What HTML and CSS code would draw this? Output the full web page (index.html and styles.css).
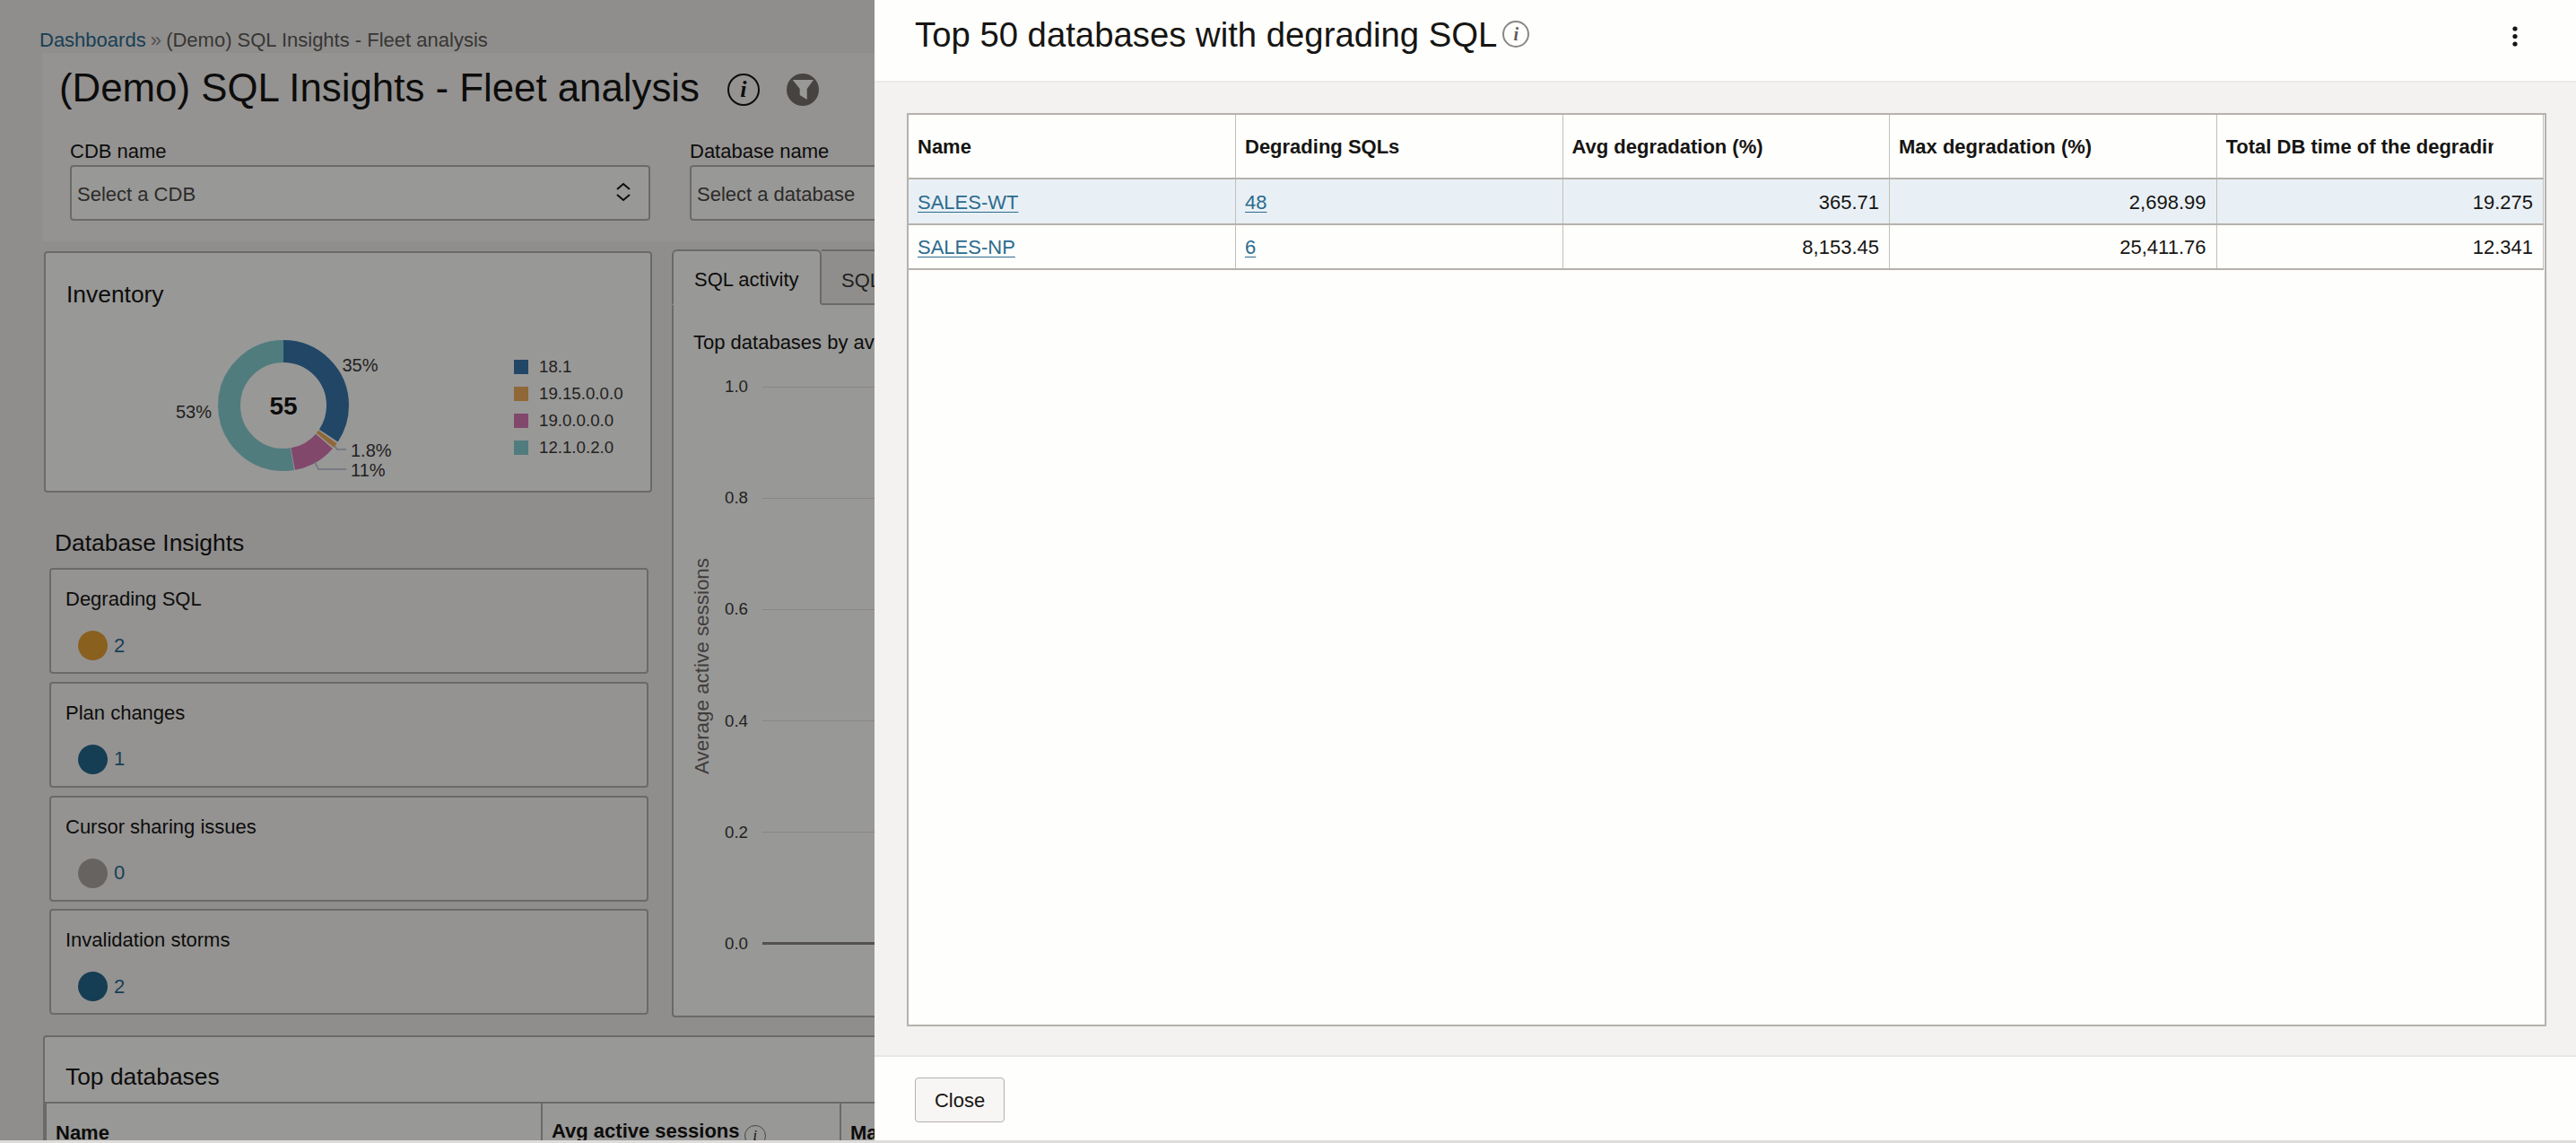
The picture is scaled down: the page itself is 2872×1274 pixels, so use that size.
FILE: index.html
```html
<!DOCTYPE html>
<html lang="en">
<head>
<meta charset="utf-8">
<title>(Demo) SQL Insights - Fleet analysis</title>
<link rel="stylesheet" href="styles.css">
</head>
<body>
<div class="page">
  <nav class="crumbs"><a class="link" href="#">Dashboards</a> <span class="sep">»</span> (Demo) SQL Insights - Fleet analysis</nav>
  <header class="titlebar">
    <div class="title-row">
      <h1>(Demo) SQL Insights - Fleet analysis</h1>
      <span class="info-lg"><i>i</i></span>
      <svg class="filter-icon" viewBox="0 0 36 36"><circle cx="18" cy="18" r="18" fill="#75716c"/><path d="M6.7 7H30L22.7 17V29L14.7 24V17Z" fill="#fefefc"/></svg>
    </div>
    <div class="filters">
      <label class="field"><span class="field-label">CDB name</span>
        <span class="select">Select a CDB
          <svg class="chev" viewBox="0 0 16 22"><path d="M1 8l7-6 7 6M1 14l7 6 7-6" fill="none" stroke="#161513" stroke-width="2"/></svg>
        </span></label>
      <label class="field"><span class="field-label">Database name</span>
        <span class="select">Select a database</span></label>
    </div>
  </header>

  <main class="grid">
    <div class="left">
      <section class="panel inventory">
        <h2>Inventory</h2>
        <div class="inv-body">
          <svg class="donut" viewBox="0 0 250 170" width="250" height="170">
            <g fill="none" stroke-width="25" transform="rotate(-90 126 87)">
              <circle cx="126" cy="87" r="60.5" pathLength="55" stroke="#3a76ab" stroke-dasharray="18.9 36.1" stroke-dashoffset="0"/>
              <circle cx="126" cy="87" r="60.5" pathLength="55" stroke="#f0ac5c" stroke-dasharray="0.7 54.3" stroke-dashoffset="-19.15"/>
              <circle cx="126" cy="87" r="60.5" pathLength="55" stroke="#d878b4" stroke-dasharray="5.9 49.1" stroke-dashoffset="-20.05"/>
              <circle cx="126" cy="87" r="60.5" pathLength="55" stroke="#87cfd2" stroke-dasharray="28.95 26.05" stroke-dashoffset="-26.05"/>
            </g>
            <path class="leader" d="M183 132l3 4h10M161 150l4 8h31"/>
            <text class="pct" x="191.5" y="49">35%</text>
            <text class="pct" x="6" y="101">53%</text>
            <text class="pct" x="201" y="144">1.8%</text>
            <text class="pct" x="201" y="166">11%</text>
            <text class="total" x="126" y="97" text-anchor="middle">55</text>
          </svg>
          <ul class="legend">
            <li><span class="sw s1"></span>18.1</li>
            <li><span class="sw s2"></span>19.15.0.0.0</li>
            <li><span class="sw s3"></span>19.0.0.0.0</li>
            <li><span class="sw s4"></span>12.1.0.2.0</li>
          </ul>
        </div>
      </section>
      <h2 class="insights-title">Database Insights</h2>
      <section class="card"><h3>Degrading SQL</h3><p class="metric"><span class="dot amber"></span><a class="link" href="#">2</a></p></section>
      <section class="card"><h3>Plan changes</h3><p class="metric"><span class="dot blue"></span><a class="link" href="#">1</a></p></section>
      <section class="card"><h3>Cursor sharing issues</h3><p class="metric"><span class="dot grey"></span><a class="link" href="#">0</a></p></section>
      <section class="card"><h3>Invalidation storms</h3><p class="metric"><span class="dot blue"></span><a class="link" href="#">2</a></p></section>
    </div>

    <section class="activity">
      <div class="tabs"><span class="tab active">SQL activity</span><span class="tab">SQL statistics</span></div>
      <div class="activity-body">
        <p class="chart-title">Top databases by average active sessions</p>
        <div class="chart">
          <span class="axis-title">Average active sessions</span>
          <div class="plot">
            <div class="tick"><span>1.0</span><b></b></div>
            <div class="tick"><span>0.8</span><b></b></div>
            <div class="tick"><span>0.6</span><b></b></div>
            <div class="tick"><span>0.4</span><b></b></div>
            <div class="tick"><span>0.2</span><b></b></div>
            <div class="tick zero"><span>0.0</span><b></b></div>
          </div>
        </div>
      </div>
    </section>
  </main>

  <section class="panel topdb">
    <h2>Top databases</h2>
    <table class="topdb-table">
      <tr><th class="c1">Name</th><th class="c2">Avg active sessions <span class="info-sm"><i>i</i></span></th><th>Max active sessions</th></tr>
    </table>
  </section>
</div>

<div class="scrim"></div>

<aside class="modal">
  <header class="modal-head">
    <h2>Top 50 databases with degrading SQL</h2>
    <span class="info-md"><i>i</i></span>
    <svg class="kebab" viewBox="0 0 6 24" width="6" height="24"><circle cx="3" cy="4" r="2.6"/><circle cx="3" cy="12.5" r="2.6"/><circle cx="3" cy="21" r="2.6"/></svg>
  </header>
  <div class="modal-body">
    <div class="table-box">
      <table class="data">
        <thead>
          <tr>
            <th>Name</th>
            <th>Degrading SQLs</th>
            <th>Avg degradation (%)</th>
            <th>Max degradation (%)</th>
            <th class="clip"><span>Total DB time of the degrading SQLs</span></th>
          </tr>
        </thead>
        <tbody>
          <tr class="hi">
            <td><a class="link u" href="#">SALES-WT</a></td>
            <td><a class="link u" href="#">48</a></td>
            <td class="num">365.71</td>
            <td class="num">2,698.99</td>
            <td class="num">19.275</td>
          </tr>
          <tr>
            <td><a class="link u" href="#">SALES-NP</a></td>
            <td><a class="link u" href="#">6</a></td>
            <td class="num">8,153.45</td>
            <td class="num">25,411.76</td>
            <td class="num">12.341</td>
          </tr>
        </tbody>
      </table>
    </div>
  </div>
  <footer class="modal-foot"><button class="btn" type="button">Close</button></footer>
</aside>
<div class="bottom-strip"></div>
</body>
</html>
```
FILE: styles.css
```css
* { box-sizing: border-box; }
html, body { margin: 0; height: 1274px; overflow: hidden; }
body {
  position: relative;
  font-family: "Liberation Sans", Arial, sans-serif;
  font-size: 22px;
  color: #161513;
  background: #eeedeb;
}
h1, h2, h3, p, ul { margin: 0; padding: 0; font-weight: 400; }
.link { color: #2c6b8e; text-decoration: none; }
.link.u { text-decoration: underline; text-underline-offset: 3px; text-decoration-thickness: 1px; }

.page { height: 1271px; width: 2872px; overflow: hidden; }

.crumbs { height: 59px; padding: 32px 0 0 44px; line-height: 26px; color: #5e5b57; }
.sep { color: #8a8784; margin-right: -1px; margin-left: -1px; }

.titlebar { margin-left: 47px; height: 210px; background: #f7f6f4; padding-left: 19px; }
.title-row { height: 78px; display: flex; align-items: center; }
h1 { font-size: 43.8px; line-height: 78px; white-space: nowrap; }
.info-lg, .info-md, .info-sm {
  display: inline-flex; align-items: center; justify-content: center;
  border-radius: 50%; font-family: "Liberation Serif", serif; flex: none;
}
.info-lg { width: 36px; height: 36px; border: 2px solid #161513; margin: 4px 0 0 31px; font-size: 26px; font-weight: 700; }
.filter-icon { width: 36px; height: 36px; margin: 4px 0 0 30px; flex: none; }

.filters { display: flex; gap: 44px; margin-top: 19px; padding-left: 12px; }
.field { display: flex; flex-direction: column; width: 647px; }
.field-label { line-height: 26px; height: 28px; }
.select {
  height: 62px; display: flex; align-items: center; justify-content: space-between;
  padding: 4px 20px 0 6px; border: 2px solid #b5b1ac; border-radius: 4px;
  background: #fefefc; color: #4b4845;
}
.chev { width: 16px; height: 22px; margin-top: -6px; }

.grid { display: grid; grid-template-columns: 678px 2080px; gap: 22px; margin: 9px 0 0 49px; height: 856px; }
.left { padding-top: 2px; }
.panel { background: #fefefc; border: 2px solid #b5b1ac; border-radius: 4px; }
.inventory { height: 269px; }
.panel h2 { font-size: 26.4px; line-height: 32px; padding: 30px 0 0 23px; }
.inv-body { display: flex; margin: 21px 0 0 139px; }
.donut { flex: none; overflow: visible; }
.leader { fill: none; stroke: #b3bfcf; stroke-width: 1.5; }
.pct { font-size: 20px; fill: #3a3835; }
.total { font-size: 28px; font-weight: 700; fill: #161513; }
.legend { list-style: none; margin: 29px 0 0 133px; }
.legend li { display: flex; align-items: center; height: 30px; font-size: 18.7px; color: #3a3835; white-space: nowrap; }
.sw { width: 16px; height: 16px; margin-right: 12px; }
.s1 { background: #3a76ab; }
.s2 { background: #f0ac5c; }
.s3 { background: #d878b4; }
.s4 { background: #87cfd2; }

.insights-title { font-size: 26.4px; line-height: 32px; margin: 40px 0 12px 12px; height: 32px; }
.card {
  width: 668px; height: 118px; margin: 0 0 8.8px 6px; padding: 20px 0 0 16px;
  background: #f7f6f4; border: 2px solid #b5b1ac; border-radius: 4px;
}
.card h3 { font-size: 22px; line-height: 26px; }
.metric { display: flex; align-items: center; margin: 22px 0 0 14px; line-height: 32px; }
.dot { width: 33px; height: 33px; border-radius: 50%; margin-right: 7px; }
.amber { background: #e6a035; }
.blue { background: #24668c; }
.grey { background: #aca6a1; }

.activity { position: relative; }
.tabs { display: flex; height: 62px; border-bottom: 2px solid #b5b1ac; }
.tab { display: flex; align-items: center; padding: 8px 22px 0; background: #eeedeb; border: 2px solid #b5b1ac; border-left: 0; border-bottom: 0; border-radius: 0 4px 0 0; color: #3a3835; white-space: nowrap; }
.tab.active { width: 167px; background: #fefefc; border-left: 2px solid #b5b1ac; border-bottom: 2px solid #fefefc; height: 62px; color: #161513; border-radius: 6px 6px 0 0; padding-top: 6px; padding-left: 23px; }
.activity-body { height: 794px; background: #fefefc; border: 2px solid #b5b1ac; border-top: 0; border-radius: 0 0 4px 4px; padding: 29px 0 0 22px; }
.chart-title { line-height: 26px; white-space: nowrap; }
.chart { display: flex; margin-top: 21px; height: 651px; }
.axis-title { writing-mode: vertical-rl; transform: rotate(180deg); align-self: center; width: 24px; font-size: 22.4px; line-height: 24px; color: #6b6865; margin-left: -2px; white-space: nowrap; margin-top: 2px; }
.plot { flex: 1; display: flex; flex-direction: column; justify-content: space-between; margin-left: 13px; padding-right: 40px; }
.tick { display: flex; align-items: center; height: 30px; font-size: 18.7px; color: #3a3835; }
.tick span { width: 42px; }
.tick b { flex: 1; height: 1px; background: #e4e2df; }
.tick.zero b { height: 3px; background: #8b8885; }

.topdb { margin: 20px 0 0 48px; width: 2700px; height: 130px; }
.topdb h2 { padding-top: 28px; }
.topdb-table { border-collapse: collapse; table-layout: fixed; width: 2696px; margin-top: 12px; border-top: 2px solid #b5b1ac; }
.topdb-table th { text-align: left; font-weight: 700; font-size: 22px; padding: 18px 10px; border-left: 2px solid #b5b1ac; }
.topdb-table th.c1 { width: 553px; }
.topdb-table th.c2 { width: 333px; }
.info-sm { width: 24px; height: 24px; margin-left: -1px; border: 1.5px solid #7a7773; font-size: 16px; font-weight: 400; vertical-align: -3px; }

.scrim { position: absolute; inset: 0; background: rgba(0,0,0,.4); }

.modal {
  position: absolute; left: 975px; top: 0; width: 1897px; height: 1274px;
  display: flex; flex-direction: column; background: #fefefc;
}
.modal-head { height: 92px; flex: none; display: flex; align-items: flex-start; padding: 17px 0 0 45px; background: #fefefc; border-bottom: 2px solid #ebeae8; position: relative; }
.modal-head h2 { font-size: 38.3px; line-height: 44px; white-space: nowrap; }
.info-md { width: 30px; height: 30px; margin: 6px 0 0 6px; border: 2px solid #8a8784; color: #5e5b57; font-size: 20px; font-weight: 700; }
.kebab { position: absolute; left: 1826px; top: 28px; fill: #161513; }

.modal-body { height: 1086px; flex: none; background: #f3f2f0; padding: 34px 33px 32px 36px; border-bottom: 2px solid #e8e7e5; }
.table-box { height: 1018px; background: #fefefc; border: 2px solid #b5b1ac; overflow: hidden; }
.data { border-collapse: collapse; table-layout: fixed; width: 1823px; }
.data th, .data td { padding: 2px 11px 0 10px; border: 1px solid #c2bfbb; border-top: 0; }
.data td { padding-top: 3px; }
.data th:first-child, .data td:first-child { border-left: 0; }
.data th { height: 71px; text-align: left; font-size: 22px; font-weight: 700; border-bottom: 2px solid #b5b1ac; white-space: nowrap; overflow: hidden; }
.data td { height: 50.5px; border-bottom: 2px solid #b5b1ac; }
.data .hi td { background: #e9f0f5; }
.num { text-align: right; }
.data th.clip { padding-right: 55px; }
.clip span { display: block; overflow: hidden; white-space: nowrap; }

.modal-foot { flex: 1; background: #fefefc; padding: 23px 0 0 45px; }
.btn {
  display: block; width: 100px; height: 50px; font: 22px "Liberation Sans", Arial, sans-serif; color: #161513;
  background: #f7f6f4; border: 1px solid #b5b1ac; border-radius: 4px; padding: 2px 0 0;
}
.bottom-strip { position: absolute; left: 0; right: 0; bottom: 0; height: 3px; background: #dedcda; }
```
